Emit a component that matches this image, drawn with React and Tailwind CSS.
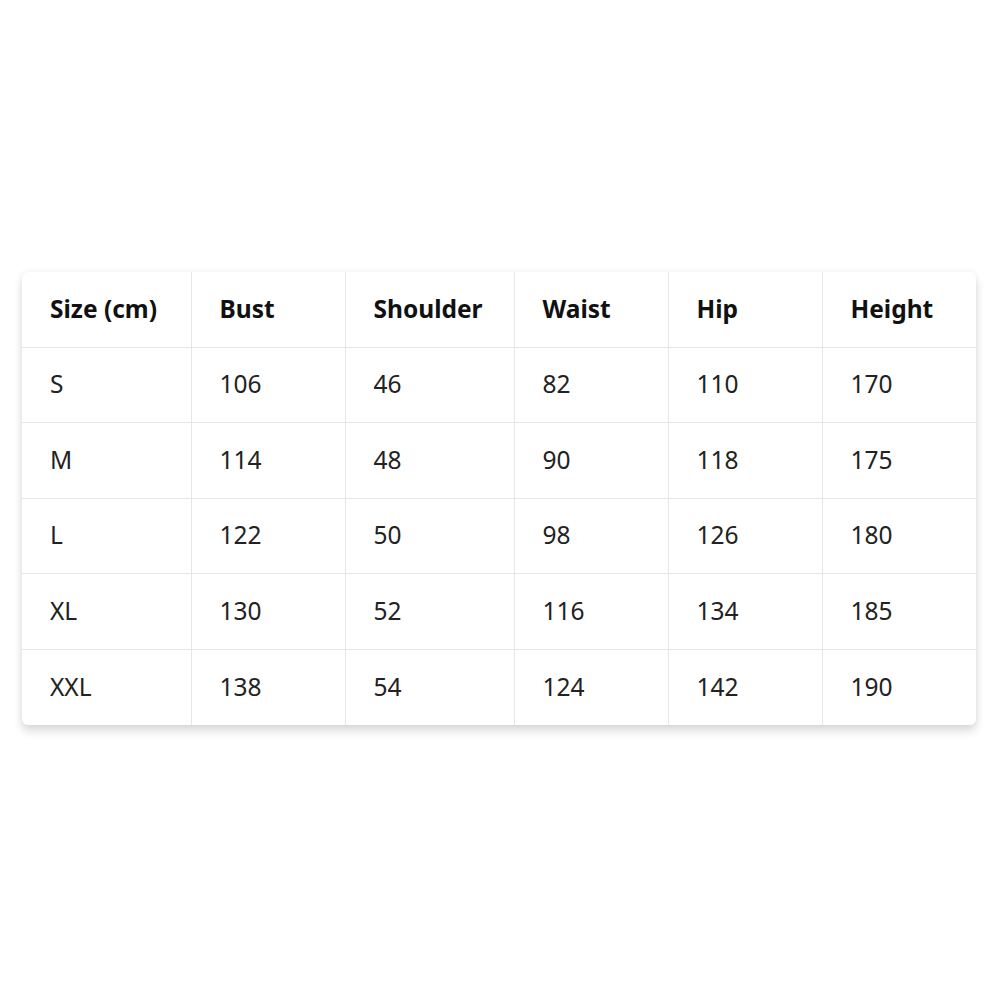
import React from 'react';

const columns = ['Size (cm)', 'Bust', 'Shoulder', 'Waist', 'Hip', 'Height'];
const widths = ['w-[169px]', 'w-[154px]', 'w-[169px]', 'w-[154px]', 'w-[154px]', 'w-[154px]'];

const rows = [
  ['S', '106', '46', '82', '110', '170'],
  ['M', '114', '48', '90', '118', '175'],
  ['L', '122', '50', '98', '126', '180'],
  ['XL', '130', '52', '116', '134', '185'],
  ['XXL', '138', '54', '124', '142', '190'],
];

export default function App() {
  return (
    <div
      className="w-[1000px] h-[1000px] bg-white pt-[272px] pl-[22px]"
      style={{ fontFamily: '"Segoe UI", "Noto Sans", "Open Sans", sans-serif' }}
    >
      <div className="w-[954px] rounded-md bg-white shadow-[0_6px_10px_rgba(0,0,0,0.14),0_0_6px_rgba(0,0,0,0.06)] overflow-hidden">
        <table className="w-[954px] table-fixed border-collapse text-left">
          <thead>
            <tr className="h-[75px]">
              {columns.map((c, i) => (
                <th
                  key={c}
                  className={`${widths[i]} pl-[28px] text-[24.5px] font-bold text-[#111] border-b border-[#e6e6e6] ${i > 0 ? 'border-l' : ''}`}
                >
                  {c}
                </th>
              ))}
            </tr>
          </thead>
          <tbody>
            {rows.map((r, ri) => (
              <tr key={r[0]} className="h-[75.5px]">
                {r.map((v, i) => (
                  <td
                    key={i}
                    className={`pl-[28px] text-[24.5px] text-[#222] border-[#e6e6e6] ${i > 0 ? 'border-l' : ''} ${ri < rows.length - 1 ? 'border-b' : ''}`}
                  >
                    {v}
                  </td>
                ))}
              </tr>
            ))}
          </tbody>
        </table>
      </div>
    </div>
  );
}
